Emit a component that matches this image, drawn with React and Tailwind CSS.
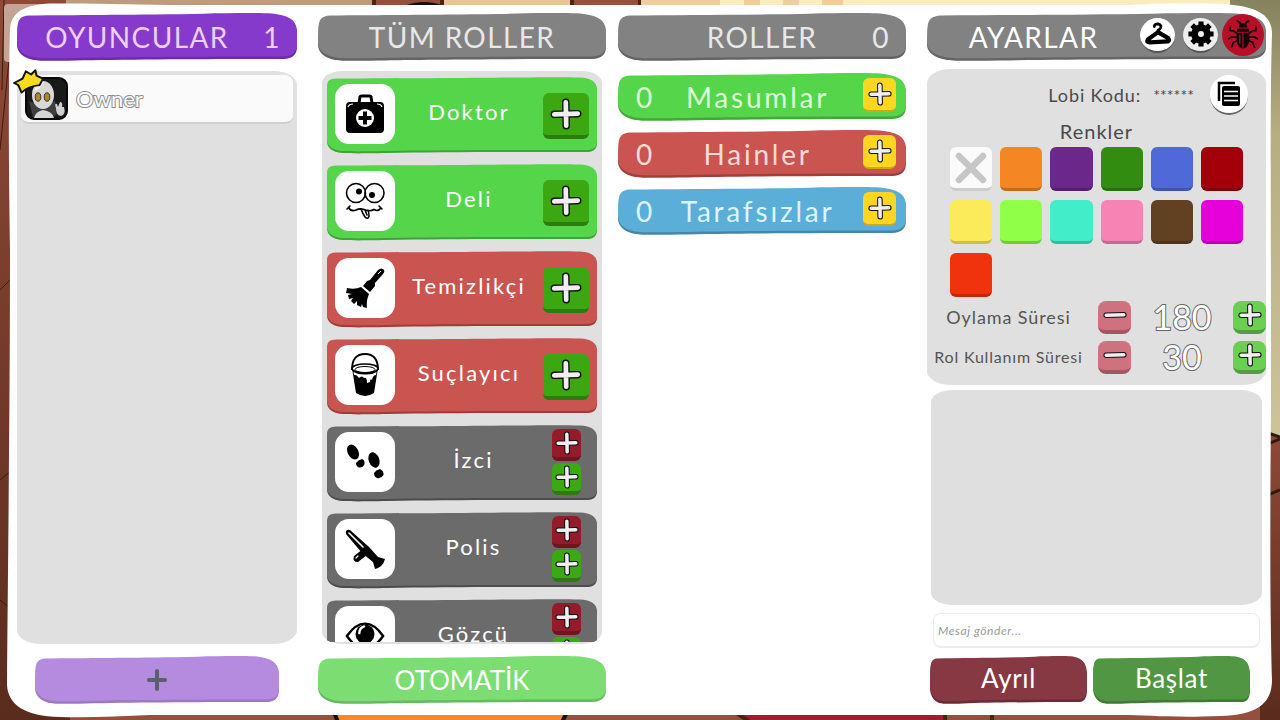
import { useState } from "react";
import clsx from "clsx";

const SLAB =
  "M0.500 14 C1 6 4 3 12 2.500 C60 2 110 2 180 1 C210 0 245 -0.500 262 0.500 C278 2 287 6 288 17 L288 31 C288 39 284 43 274 43.500 C200 43.500 110 44 60 45 C35 45.500 24 45.500 17 44.500 C6 42 0.500 37 0 30 Z";
const CARD =
  "M0 9 C0.500 3 3 2 9 1.500 C80 1.500 150 1 190 0.500 C220 0 240 0 252 0.500 C263 1 269 5 269 12 L269 64 C269 70 266 72.500 260 73 C190 73 110 73 60 74 C35 74.500 25 74.500 15 74 C5 73 0 69 0 62 Z";

// hand drawn plate that stretches behind a bar or a card
function Plate({ fill, shade, card }) {
  return (
    <svg
      aria-hidden="true"
      className="absolute inset-0 -z-10 h-full w-full"
      viewBox={card ? "0 0 269 77" : "0 0 288 48"}
      preserveAspectRatio="none"
    >
      <path
        d={card ? CARD : SLAB}
        className={shade}
        transform={card ? "translate(0 2)" : "translate(0 2.500)"}
      />
      <path d={card ? CARD : SLAB} className={fill} />
    </svg>
  );
}

function Plus({ className, minus }) {
  const d = minus ? "M4 15.300 L26 14.700" : "M4 15.300 L26 14.700 M14.800 4 L15.200 26";
  return (
    <svg
      aria-hidden="true"
      viewBox="0 0 30 30"
      className={className}
      fill="none"
      strokeLinecap="round"
    >
      <path d={d} stroke="#111" strokeWidth="7" />
      <path d={d} stroke="#f1eef1" strokeWidth="4.400" />
    </svg>
  );
}

function BagIcon() {
  return (
    <svg viewBox="0 0 40 40" className="h-10 w-10">
      <path
        d="M14 9 L15 3 Q15 2 17 2 H24 Q26 2 26 3 L27 9"
        fill="none"
        stroke="#000"
        strokeWidth="3"
      />
      <rect x="1" y="8" width="38" height="31" rx="4" />
      <path
        d="M3 13 Q4 10 8 10 M37 13 Q36 10 32 10"
        fill="none"
        stroke="#fff"
        strokeWidth="1.200"
      />
      <circle cx="20" cy="24" r="9" fill="#fff" />
      <path d="M20 17.500 V30.500 M13.500 24 H26.500" stroke="#000" strokeWidth="4" />
    </svg>
  );
}

function CrazyIcon() {
  return (
    <svg
      viewBox="0 0 40 40"
      className="h-10 w-10"
      fill="none"
      stroke="#000"
      strokeWidth="1.600"
      strokeLinecap="round"
    >
      <circle cx="11" cy="12" r="9.500" />
      <circle cx="29.500" cy="12" r="9.500" />
      <circle cx="14" cy="10.500" r="2.200" fill="#000" />
      <circle cx="27" cy="14" r="2.200" fill="#000" />
      <path d="M2 28 L5 25 M3.500 26.500 Q6 31 11 29 Q15 27 19 28.500 Q25 31 29 28.500 Q33 31 36 27 M34 25 L37 28" />
      <path d="M16 28 Q18 33 20 36 Q23 39 24 35 Q24 31 23 29 M20 29 L22 34" />
    </svg>
  );
}

function BroomIcon() {
  return (
    <svg viewBox="0 0 40 40" className="h-10 w-10">
      <path d="M33 2 Q37 -1 39 2 Q40 4 38 6 L30 15 L30 18 L25 24 L18 18 L22 13 L25 12 Z" />
      <path d="M16 19 L24 26 Q21 33 22 40 L18 39 L17 36 L16 39 L12 37 L12 33 L9 36 L6 33 L8 30 L4 31 L3 27 L7 26 L1 25 L2 20 Q10 22 16 19 Z" />
      <path d="M33 6 L36 3" stroke="#fff" strokeWidth="1" />
    </svg>
  );
}

function BucketIcon() {
  return (
    <svg viewBox="0 0 40 44" className="h-11 w-10">
      <path
        d="M7 17 Q7 1 20 1 Q33 1 33 17"
        fill="none"
        stroke="#000"
        strokeWidth="1.800"
      />
      <path d="M7 15 L11 40 Q20 46 29 40 L33 15 Z" />
      <ellipse cx="20" cy="15.500" rx="13" ry="4.500" fill="#fff" stroke="#000" strokeWidth="1.600" />
      <ellipse cx="20" cy="16.500" rx="10" ry="3" fill="none" stroke="#000" />
      <path
        d="M8.500 19 Q14 22 20 21.500 Q27 22 31.500 19 L31 22 Q28 22 27 27 Q25 25 25 29 L22 30 Q22 24 19 25 Q17 22 14 25 Q11 21 9 22 Z"
        fill="#fff"
      />
    </svg>
  );
}

function StepsIcon() {
  return (
    <svg viewBox="0 0 40 40" className="h-10 w-10">
      <ellipse cx="8" cy="10" rx="5.300" ry="8" transform="rotate(-28 8 10)" />
      <path d="M11 21 Q13 18 17 17 Q20 18 19.500 22 Q18 26 14 25.500 Q11 24 11 21 Z" />
      <ellipse cx="29" cy="18" rx="5.300" ry="8" transform="rotate(-20 29 18)" />
      <path d="M29 31 Q31 28 35 27 Q39 29 38.500 33 Q36 37 32 36 Q29 35 29 31 Z" />
    </svg>
  );
}

function BatonIcon() {
  return (
    <svg viewBox="0 0 40 40" className="h-10 w-10">
      <path d="M1 5 Q0 0 5 1 L24 18 L33 28 L40 30 Q38 38 30 40 L28 33 L17 24 Z" />
      <path d="M18 20 L9 27 Q7 33 13 33 L22 26 Z" />
      <path d="M4 4 L18 18" stroke="#fff" strokeWidth="1.600" strokeLinecap="round" />
      <path d="M11 29 L13 27" stroke="#fff" strokeWidth="1.200" strokeLinecap="round" />
    </svg>
  );
}

function EyeIcon() {
  return (
    <svg viewBox="0 0 42 32" className="h-8 w-10">
      <path
        d="M2 16 Q11 3 21 3 Q31 3 40 16 Q31 29 21 29 Q11 29 2 16 Z"
        fill="#fff"
        stroke="#000"
        strokeWidth="2.500"
      />
      <circle cx="21" cy="14" r="10" />
      <path d="M15 13 Q15 8 20 6" stroke="#fff" strokeWidth="2.500" fill="none" strokeLinecap="round" />
    </svg>
  );
}

function HangerIcon() {
  return (
    <svg viewBox="0 0 30 26" className="h-6 w-7" fill="none" stroke="#000" strokeLinecap="round" strokeLinejoin="round">
      <path d="M11 5 Q11 2 15 2 Q19 3 18 6 Q17 8 15 9 V11" strokeWidth="3" />
      <path d="M15 11 L4 19 Q2 22 6 22 L26 21 Q28 20 26 17.500 Z" strokeWidth="4.500" />
    </svg>
  );
}

function GearIcon() {
  return (
    <svg viewBox="0 0 30 30" className="h-7 w-7">
      <circle cx="15" cy="15" r="10.500" />
      <path
        d="M15 1.500 V28.500 M1.500 15 H28.500 M5.500 5.500 L24.500 24.500 M24.500 5.500 L5.500 24.500"
        stroke="#000"
        strokeWidth="5.500"
      />
      <circle cx="15" cy="15" r="3.200" fill="#eee" />
    </svg>
  );
}

function BugIcon() {
  return (
    <svg viewBox="0 0 30 30" className="h-8 w-8" fill="none" stroke="#16060a" strokeWidth="1.600">
      <path d="M13 5 Q12 2 9 2 M17 5 Q18 2 21 2 M10 14 L6 11 L3 11 L3 7 M20 14 L24 11 L27 11 L27 7 M10 17 H4 L1 19 M20 17 H26 L29 19 M10 20 L6 22 L4 27 M20 20 L24 22 L26 27" />
      <path d="M11 8 Q11 4 15 4 Q19 4 19 8 Z M10 9 H20 L21 12 H9 Z" fill="#16060a" stroke="none" />
      <path d="M9 13 H14.500 V28 Q9 26 9 18 Z M15.500 13 H21 V18 Q21 26 15.500 28 Z" fill="#16060a" stroke="none" />
      <path d="M12 15 V23" stroke="#c2122d" strokeWidth="1" />
    </svg>
  );
}

function CopyIcon() {
  return (
    <svg viewBox="0 0 24 26" className="h-[26px] w-6">
      <path d="M2 20 V2 H18" fill="none" stroke="#000" strokeWidth="2.500" />
      <rect x="5" y="5" width="18" height="20" rx="2" />
      <path d="M7 10.500 H21 M7 15 H21 M7 19.500 H21" stroke="#fff" strokeWidth="1.500" />
    </svg>
  );
}

function Crown() {
  return (
    <svg viewBox="0 0 30 26" className="absolute -left-3 -top-2 h-7 w-8">
      <path
        d="M8 22 L5 15 L1 13 L9 9 L12 2 L17 5 L21 1 L22 6 L28 9 L25 15 Q14 16 8 22 Z"
        fill="#f8dc1c"
        stroke="#111"
        strokeWidth="1.800"
        strokeLinejoin="round"
      />
    </svg>
  );
}

function Avatar() {
  return (
    <svg viewBox="0 0 43 43" className="h-[43px] w-[43px]">
      <rect x="1" y="1" width="41" height="41" rx="8" fill="#191919" stroke="#080808" strokeWidth="2" />
      <path d="M4 24 Q14 30 30 24 L33 36 L28 40 H8 Z" fill="#3f3f3f" />
      <path d="M9 41 Q11 34 18 33 Q27 34 29 41 Z" fill="#d5d5d5" />
      <ellipse cx="18" cy="18" rx="11" ry="14" fill="#d9d9d9" />
      <path d="M9 14 Q12 5 19 5 Q16 12 9 14 Z" fill="#f4f4f4" />
      <ellipse cx="13" cy="20" rx="2.800" ry="4.200" fill="#b0862b" stroke="#3a3325" />
      <ellipse cx="22" cy="20" rx="2.800" ry="4.200" fill="#b0862b" stroke="#3a3325" />
      <path d="M31 31 Q29 26 32 27 L33 30 L35 25 Q38 25 37 30 L39 30 Q41 38 36 39 Q31 38 31 31 Z" fill="#cfcfcf" />
    </svg>
  );
}

function Backdrop() {
  return (
    <svg
      aria-hidden="true"
      className="absolute inset-0 -z-10 h-full w-full"
      viewBox="0 0 1280 720"
      preserveAspectRatio="none"
    >
      <defs>
        <linearGradient id="wall" x1="0" y1="0" x2="0" y2="1">
          <stop offset="0" stopColor="#85825f" />
          <stop offset="0.3" stopColor="#b7ad83" />
          <stop offset="1" stopColor="#cdc49c" />
        </linearGradient>
        <linearGradient id="wood" x1="0" y1="0" x2="0" y2="1">
          <stop offset="0" stopColor="#8f4936" />
          <stop offset="1" stopColor="#5a2c1e" />
        </linearGradient>
      </defs>
      <rect width="1280" height="720" fill="#94503c" />
      <rect width="70" height="720" fill="url(#wood)" />
      <path d="M4 0 L2 90 M9 60 L0 150 M0 290 L12 278 M0 480 L12 470 M0 600 L12 610" stroke="#3c1c12" strokeWidth="1" />
      <rect x="66" width="310" height="20" fill="#bd9b7c" />
      <rect x="443" width="128" height="20" fill="#e9c49b" />
      <path d="M374 0 V20 M442 0 V20 M572 0 V20 M640 0 V20" stroke="#4a2410" strokeWidth="4" />
      <path d="M404 6 Q424 -2 444 6 Z" fill="#111" />
      <rect x="641" width="620" height="20" fill="#fbecbd" />
      <path d="M641 0 H720 V20 H641 Z M744 0 H760 V20 H744 Z M783 0 H799 V20 H783 Z M822 0 H843 V20 H822 Z" fill="#efcca2" />
      <rect x="1230" width="50" height="440" fill="url(#wall)" />
      <path d="M1260 430 L1280 437 V720 H1260 Z" fill="url(#wood)" />
      <path d="M1262 431 L1280 437 M1270 443 L1280 439 M1268 495 L1280 490" stroke="#2e1a10" strokeWidth="3" />
      <path d="M333 710 L338 722 H562 L568 710 Z" fill="#f5892b" stroke="#111" strokeWidth="4" />
      <path d="M732 710 L750 722 H945 V710 Z" fill="#a01c33" stroke="#4a2410" strokeWidth="4" />
      <path d="M992 712 V720" stroke="#4a2410" strokeWidth="4" />
      <rect x="4" y="4" width="40" height="58" rx="4" fill="#c5a397" />
      <path
        d="M10 28 C12 12 24 5 50 3.500 C100 3 140 5 180 5 L1130 5 C1170 3 1200 3 1225 4 C1260 7 1272 16 1272 34 C1270 100 1271 200 1271 400 C1270 550 1270 600 1272 680 C1272 705 1255 715 1220 716 C1170 718 1150 715 1120 715 L150 715 C120 716 90 718 60 717 C25 716 8 705 7 685 C8 560 10 400 10 250 C9 180 8 100 10 28 Z"
        fill="#fff"
      />
    </svg>
  );
}

const roles = [
  { name: "Doktor", Icon: BagIcon, team: "good" },
  { name: "Deli", Icon: CrazyIcon, team: "good" },
  { name: "Temizlikçi", Icon: BroomIcon, team: "evil" },
  { name: "Suçlayıcı", Icon: BucketIcon, team: "evil" },
  { name: "İzci", Icon: StepsIcon, team: "any" },
  { name: "Polis", Icon: BatonIcon, team: "any" },
  { name: "Gözcü", Icon: EyeIcon, team: "any" },
];

const teamFill = {
  good: ["fill-[#55d54a]", "fill-[#3fa337]"],
  evil: ["fill-[#c95450]", "fill-[#9c3d3a]"],
  any: ["fill-[#6b6b6b]", "fill-[#4c4c4c]"],
};

const teams = [
  { name: "Masumlar", fill: "fill-[#55d54a]", shade: "fill-[#42a839]", text: "text-[#dcffd8]" },
  { name: "Hainler", fill: "fill-[#c95450]", shade: "fill-[#a0403d]", text: "text-[#ffdcd8]" },
  { name: "Tarafsızlar", fill: "fill-[#5aaed8]", shade: "fill-[#4487a8]", text: "text-[#dcf4ff]" },
];

const colors = [
  { name: "Beyaz", className: "bg-[#fafafa] border-[#cccccc]", taken: true },
  { name: "Turuncu", className: "bg-[#f58624] border-[#c56b1b]" },
  { name: "Mor", className: "bg-[#6b278a] border-[#551e6e]" },
  { name: "Yeşil", className: "bg-[#318c10] border-[#26700c]" },
  { name: "Mavi", className: "bg-[#4f69d8] border-[#3e54ae]" },
  { name: "Bordo", className: "bg-[#a30009] border-[#820007]" },
  { name: "Sarı", className: "bg-[#fbeb5b] border-[#cabd48]" },
  { name: "Açık yeşil", className: "bg-[#8fff48] border-[#72cc39]" },
  { name: "Turkuaz", className: "bg-[#42eec9] border-[#34bea0]" },
  { name: "Pembe", className: "bg-[#f783b5] border-[#c66991]" },
  { name: "Kahverengi", className: "bg-[#624123] border-[#4e341c]" },
  { name: "Eflatun", className: "bg-[#e600d9] border-[#b800ae]" },
  { name: "Kırmızı", className: "bg-[#f0330c] border-[#c0290a]" },
];

function Heading({ children, count, purple }) {
  return (
    <header
      className={clsx(
        "relative isolate flex h-12 shrink-0 items-center justify-center text-[28px] tracking-wider",
        purple ? "pr-10 text-[#ecd0ff]" : "text-[#e8e8e8]",
      )}
    >
      <Plate
        fill={purple ? "fill-[#863acb]" : "fill-[#828282]"}
        shade={purple ? "fill-[#6c2ba8]" : "fill-[#646464]"}
      />
      <h2>{children}</h2>
      {count !== undefined && <span className="absolute right-4">{count}</span>}
    </header>
  );
}

function RoleCard({ name, Icon, team }) {
  const [fill, shade] = teamFill[team];

  return (
    <li className="relative isolate flex h-[77px] shrink-0 items-center px-2">
      <Plate card fill={fill} shade={shade} />
      <span className="mb-1 flex h-[60px] w-[60px] shrink-0 items-center justify-center rounded-[14px] bg-white">
        <Icon />
      </span>
      <span className="flex-1 pb-2 text-center text-[22px] tracking-widest text-white">
        {name}
      </span>
      {team === "any" ? (
        <div className="mb-1 mr-2 flex w-[29px] flex-col gap-[2px]">
          <button
            aria-label={`${name} hain ekle`}
            className="flex h-8 items-center justify-center rounded-md border-b-4 border-[#6f1520] bg-[#951b2b]"
          >
            <Plus className="h-6 w-6" />
          </button>
          <button
            aria-label={`${name} masum ekle`}
            className="flex h-8 items-center justify-center rounded-md border-b-4 border-[#2d7a14] bg-[#3ba815]"
          >
            <Plus className="h-6 w-6" />
          </button>
        </div>
      ) : (
        <button
          aria-label={`${name} ekle`}
          className="flex h-[46px] w-[46px] items-center justify-center rounded-md border-b-4 border-[#2c7c10] bg-[#3ba811]"
        >
          <Plus className="h-8 w-8" />
        </button>
      )}
    </li>
  );
}

function Stepper({ label, value, onChange, step, small }) {
  return (
    <div className="flex h-10 items-center">
      <span
        className={clsx(
          "flex-1 whitespace-nowrap text-center tracking-wider text-[#555555]",
          small ? "text-base" : "text-lg",
        )}
      >
        {label}
      </span>
      <button
        aria-label={`${label} azalt`}
        onClick={() => onChange(value - step)}
        className="ml-2 flex h-[33px] w-[33px] items-center justify-center rounded-lg border-b-4 border-[#a45763] bg-[#d0717f]"
      >
        <Plus minus className="h-6 w-6" />
      </button>
      <output className="w-[102px] text-center text-[34px] leading-none text-white [-webkit-text-stroke:2px_#666666] [paint-order:stroke_fill]">
        {value}
      </output>
      <button
        aria-label={`${label} artır`}
        onClick={() => onChange(value + step)}
        className="flex h-[33px] w-[33px] items-center justify-center rounded-lg border-b-4 border-[#539f40] bg-[#6bcf52]"
      >
        <Plus className="h-6 w-6" />
      </button>
    </div>
  );
}

export default function App() {
  const [voteTime, setVoteTime] = useState(180);
  const [roleTime, setRoleTime] = useState(30);
  const [message, setMessage] = useState("");

  return (
    <main className="relative isolate grid h-screen min-h-[560px] grid-cols-[289fr_288fr_288fr_348fr] gap-3 overflow-hidden pb-4 pl-[17px] pr-[14px] pt-[13px] font-[Lato,sans-serif]">
      <Backdrop />

      {/* Players */}
      <section className="flex min-h-0 min-w-0 flex-col pr-[9px]">
        <Heading purple count={1}>
          OYUNCULAR
        </Heading>
        <ul className="mt-[10px] flex-1 rounded-[24px/14px] bg-[#e0e0e0] px-1 py-1">
          <li className="flex h-[49px] items-center gap-2 rounded-lg border-b-2 border-[#cfcfcf] bg-[#fafafa] pl-1">
            <div className="relative">
              <Avatar />
              <Crown />
            </div>
            <span className="text-[22px] text-[#fafafa] [-webkit-text-stroke:2px_#8c8c8c] [paint-order:stroke_fill]">
              Owner
            </span>
          </li>
        </ul>
        <button
          aria-label="Oyuncu ekle"
          className="relative isolate mx-[18px] mt-3 flex h-12 items-center justify-center"
        >
          <Plate fill="fill-[#b58be0]" shade="fill-[#9c77c4]" />
          <svg viewBox="0 0 20 22" className="h-6 w-5" stroke="#5b6070" strokeWidth="4" strokeLinecap="round">
            <path d="M2 11 H18 M10 2 V20" />
          </svg>
        </button>
      </section>

      {/* Every role */}
      <section className="flex min-h-0 min-w-0 flex-col">
        <Heading>TÜM ROLLER</Heading>
        <div className="mx-1 mt-[10px] flex min-h-0 flex-1 flex-col overflow-hidden rounded-[20px/12px] bg-[#e0e0e0] px-[5px] pb-[2px] pt-[6px]">
          <ul className="flex min-h-0 flex-1 flex-col gap-[10px] overflow-hidden">
            {roles.map((role) => (
              <RoleCard key={role.name} {...role} />
            ))}
          </ul>
        </div>
        <button className="relative isolate mt-3 flex h-12 shrink-0 items-center justify-center text-[26px] text-white">
          <Plate fill="fill-[#7bdd72]" shade="fill-[#66b95f]" />
          OTOMATİK
        </button>
      </section>

      {/* Picked roles */}
      <section className="flex min-w-0 flex-col">
        <Heading count={0}>ROLLER</Heading>
        <ul className="mt-3 flex flex-col gap-[9px]">
          {teams.map((team) => (
            <li
              key={team.name}
              className={clsx(
                "relative isolate flex h-12 items-center pl-[18px] pr-[10px] text-[28px]",
                team.text,
              )}
            >
              <Plate fill={team.fill} shade={team.shade} />
              <span>0</span>
              <span className="flex-1 text-center tracking-widest">{team.name}</span>
              <button
                aria-label={`${team.name} ekle`}
                className="mb-1 flex h-[34px] w-[33px] items-center justify-center rounded-md border-b-2 border-[#cca81b] bg-[#fdd622]"
              >
                <Plus className="h-6 w-6" />
              </button>
            </li>
          ))}
        </ul>
      </section>

      {/* Settings and chat */}
      <section className="flex min-h-0 min-w-0 flex-col pl-[9px]">
        <header className="relative isolate flex h-12 shrink-0 items-center text-[28px] tracking-wider text-white">
          <Plate fill="fill-[#828282]" shade="fill-[#646464]" />
          <h2 className="flex-1 text-center">AYARLAR</h2>
          <div className="mb-1 mr-[2px] flex items-center gap-2">
            <button aria-label="Kostüm" className="flex h-[35px] w-[35px] items-center justify-center rounded-full border-b-2 border-[#555555] bg-white">
              <HangerIcon />
            </button>
            <button aria-label="Seçenekler" className="flex h-[35px] w-[35px] items-center justify-center rounded-full border-b-2 border-[#555555] bg-[#eeeeee]">
              <GearIcon />
            </button>
            <button aria-label="Hata bildir" className="-ml-1 flex h-[42px] w-[42px] items-center justify-center rounded-full bg-[#b80f28]">
              <BugIcon />
            </button>
          </div>
        </header>

        <div className="mt-2 flex flex-col rounded-[24px/14px] bg-[#e0e0e0] pb-2 pt-[6px]">
          <div className="flex items-center justify-end gap-3 pr-[18px] text-[#4a4a4a]">
            <span className="text-lg tracking-wider">Lobi Kodu:</span>
            <span className="text-base">******</span>
            <button aria-label="Kodu kopyala" className="ml-1 flex h-10 w-[38px] items-center justify-center rounded-full border-b-2 border-[#666666] bg-white">
              <CopyIcon />
            </button>
          </div>
          <h3 className="text-center text-xl leading-8 tracking-wider text-[#4a4a4a]">
            Renkler
          </h3>
          <div className="grid grid-cols-6 gap-x-2 gap-y-[9px] px-[23px]">
            {colors.map(({ name, className, taken }) => (
              <button
                key={name}
                aria-label={name}
                className={clsx(
                  "flex h-11 items-center justify-center rounded-md border-b-[3px]",
                  className,
                )}
              >
                {taken && (
                  <svg viewBox="0 0 32 32" className="h-8 w-8" stroke="#c6c6c6" strokeWidth="6.500" strokeLinecap="round">
                    <path d="M4 4 L28 28 M28 4 L4 28" />
                  </svg>
                )}
              </button>
            ))}
          </div>
          <Stepper label="Oylama Süresi" value={voteTime} onChange={setVoteTime} step={10} />
          <Stepper small label="Rol Kullanım Süresi" value={roleTime} onChange={setRoleTime} step={5} />
        </div>

        <div className="mx-1 mt-[5px] flex-1 rounded-[22px/12px] bg-[#dfdfdf]" />
        <input
          aria-label="Mesaj"
          placeholder="Mesaj gönder..."
          value={message}
          onChange={(e) => setMessage(e.target.value)}
          className="mx-[6px] mt-2 h-[35px] rounded-lg border border-b-2 border-[#ececec] bg-white px-1 text-xs italic tracking-wider placeholder:text-[#999999]"
        />
        <div className="mt-2 grid grid-cols-2 gap-[6px] pl-[3px] pr-4 text-[26px] tracking-wide text-white">
          <button className="relative isolate h-12 pb-1">
            <Plate fill="fill-[#863843]" shade="fill-[#6b2b35]" />
            Ayrıl
          </button>
          <button className="relative isolate h-12 pb-1">
            <Plate fill="fill-[#519642]" shade="fill-[#3e7a32]" />
            Başlat
          </button>
        </div>
      </section>
    </main>
  );
}
